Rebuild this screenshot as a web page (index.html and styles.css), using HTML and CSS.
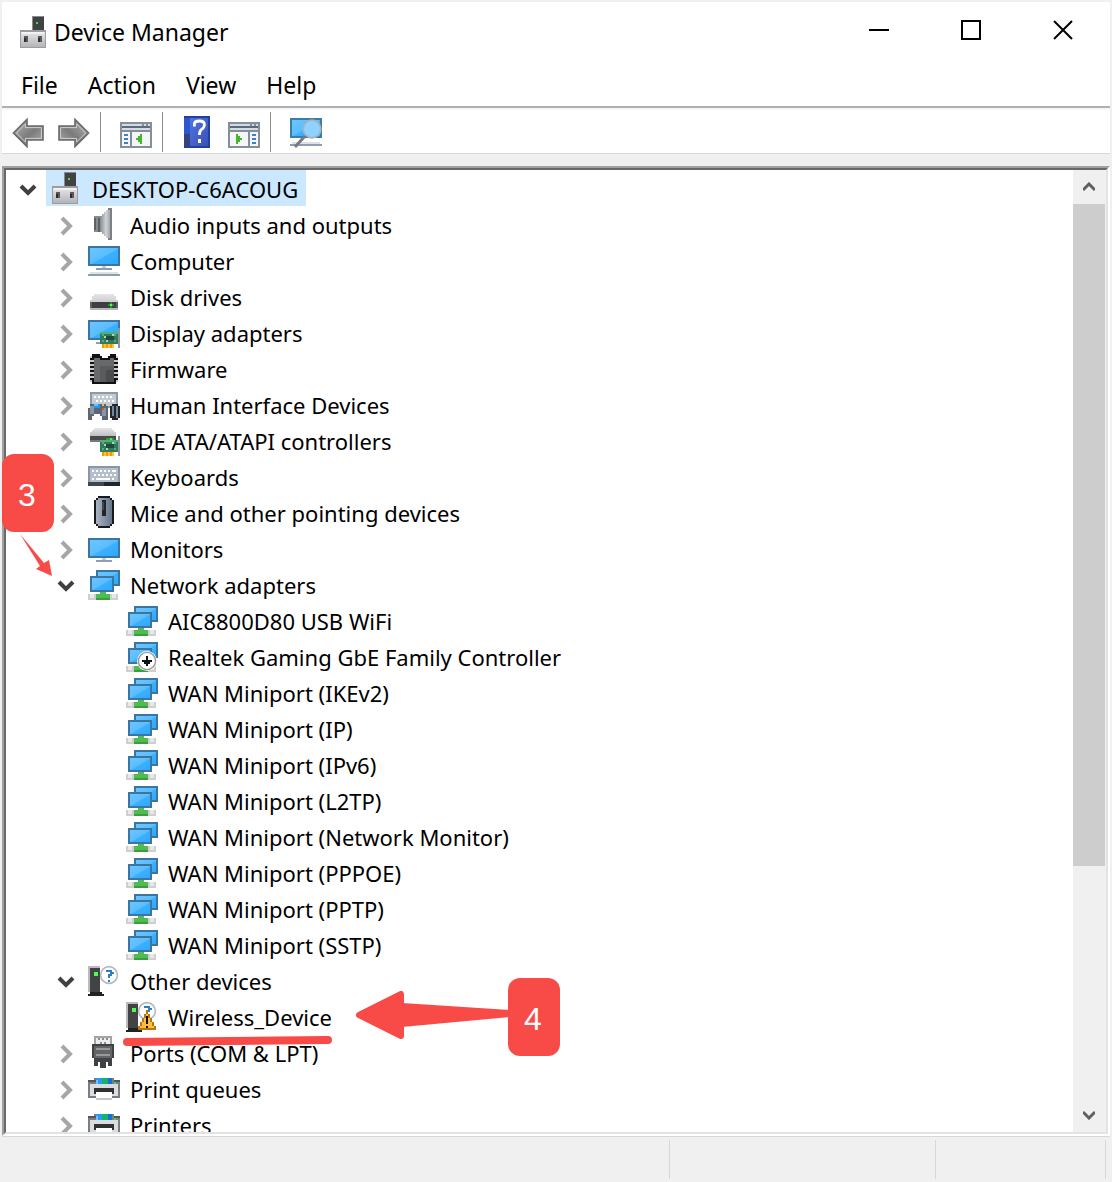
FILE: index.html
```html
<!DOCTYPE html>
<html lang="en">
  <head>
    <meta charset="UTF-8" />
    <meta name="viewport" content="width=device-width, initial-scale=1.0" />
    <title>Device Manager</title>
    <link rel="stylesheet" href="styles.css">
  </head>
  <body>
    <!-- Icon set, drawn on a 16 x 16 grid -->
    <svg class="sprite" aria-hidden="true">
      <defs>
        <linearGradient id="screen" x1="0" y1="0" x2="1" y2="1">
          <stop offset="0" stop-color="#6cc5ff" />
          <stop offset="0.5" stop-color="#5bbdff" />
          <stop offset="0.55" stop-color="#3bb0ff" />
          <stop offset="1" stop-color="#2fa8fb" />
        </linearGradient>
        <linearGradient id="metal" x1="0" y1="0" x2="0" y2="1">
          <stop offset="0" stop-color="#e6e6e8" />
          <stop offset="1" stop-color="#b4b4b8" />
        </linearGradient>
        <linearGradient id="cone" x1="0" y1="0" x2="1" y2="0">
          <stop offset="0" stop-color="#85898e" />
          <stop offset="0.5" stop-color="#d2d4d6" />
          <stop offset="1" stop-color="#8b8f95" />
        </linearGradient>
        <linearGradient id="arrowfill" x1="0" y1="0" x2="1" y2="1">
          <stop offset="0" stop-color="#b8b8b8" />
          <stop offset="0.55" stop-color="#7b7b7b" />
          <stop offset="1" stop-color="#b0b0b0" />
        </linearGradient>
        <linearGradient id="helpfill" x1="0" y1="0" x2="1" y2="1">
          <stop offset="0" stop-color="#4f74e0" />
          <stop offset="1" stop-color="#3c50b8" />
        </linearGradient>
        <linearGradient id="mousefill" x1="0" y1="0" x2="1" y2="0">
          <stop offset="0" stop-color="#a9b4c2" />
          <stop offset="1" stop-color="#66758a" />
        </linearGradient>
      </defs>

      <symbol id="i-root" viewBox="-1 0 16 16">
        <path fill="#8b8b8b" d="M6 0h6v8h-6z" />
        <path fill="#404244" d="M6.500 0.500h5.500v7.500h-5.500z" />
        <path fill="#3be03b" d="M8 3h1v1h-1z" />
        <path fill="#9d9da1" d="M0 7h13v9h-13z" />
        <path fill="url(#metal)" d="M.5 8h12v7.500h-12z" />
        <path fill="#f2f2f3" d="M1 8h11v1h-11z" />
        <path fill="#58595c" d="M2 10h2v3h-2zM9 10h2v3h-2z" />
        <path fill="#2d2e30" d="M2 11h1v2h-1zM9 11h1v2h-1z" />
      </symbol>

      <symbol id="i-audio" viewBox="0 0 16 16">
        <path fill="#878b91" d="M3 4h4v8h-4z" />
        <path fill="#5d6166" d="M3 5h1v6h-1zM5 5h1v7h-1z" />
        <path fill="url(#cone)" d="M6 4h1v-1h1v-1h1v-1h1v-1h2v16h-2v-1h-1v-1h-1v-1h-1v-1h-1z" />
        <path fill="#7d8187" d="M10 0h2v16h-2v-1h1v-14h-1z" />
      </symbol>

      <symbol id="i-computer" viewBox="0 0 16 16">
        <path fill="#3a76a0" d="M0 1h16v10h-16z" />
        <path fill="url(#screen)" d="M1 2h14v8h-14z" />
        <path fill="#c3cbd5" d="M7 11h2v1h-2z" />
        <path fill="#8f9db2" d="M4 12h8v1h-8zM0 15h16v1h-16z" />
        <path fill="#dde1e6" d="M1 14h14v1h-14z" />
      </symbol>

      <symbol id="i-disk" viewBox="0 0 16 16">
        <path fill="url(#metal)" d="M3 7h10v1h1v2h1v5h-14v-5h1v-2h1z" />
        <path fill="#3d3f41" d="M1 11h14v3h-14z" />
        <path fill="#606264" d="M1 11h1v3h-1zM14 11h1v3h-1z" />
        <path fill="#2e8b32" d="M10 12h3v1h-3zM11 11h1v3h-1z" />
        <path fill="#4dff4d" d="M11 12h1v1h-1z" />
      </symbol>

      <symbol id="i-card" viewBox="0 0 16 16">
        <path fill="#8d949b" d="M15 6h1v10h-1z" />
        <path fill="#2f7d58" d="M6 8h9v6h-9z" />
        <path fill="#52ad7e" d="M7 9h1v1h-1zM13 9h1v1h-1zM7 12h1v1h-1zM13 12h1v1h-1zM6 8h9v1h-9z" />
        <path fill="#1d4a3b" d="M9 10h4v2h-4z" />
        <path fill="#b4cfc2" d="M8 10h1v1h-1zM12 9h1v1h-1zM9 12h1v1h-1z" />
        <path fill="#f39a00" d="M7 14h6v2h-6z" />
        <path fill="#ffc13b" d="M8 14h1v2h-1zM10 14h1v2h-1zM12 14h1v2h-1z" />
      </symbol>

      <symbol id="i-display" viewBox="0 0 16 16">
        <path fill="#3a76a0" d="M0 2h16v10h-16z" />
        <path fill="url(#screen)" d="M1 3h14v8h-14z" />
        <path fill="#8f9db2" d="M4 13h4v1h-4z" />
        <use href="#i-card" width="16" height="16" />
      </symbol>

      <symbol id="i-firmware" viewBox="0 0 16 16">
        <path fill="#111" d="M2 1h4v1h1v1h3v-1h1v-1h3v15h-12z" />
        <path fill="#68696b" d="M3 3h3v1h5v-1h2v12h-10z" />
        <path fill="#5a5b5d" d="M6 7h7v8h-7z" />
        <path fill="#4b4c4e" d="M9 9h4v6h-4z" />
        <path fill="#111" d="M1 3h2v1h-2zM1 5h2v1h-2zM1 7h2v1h-2zM1 9h2v1h-2zM1 11h2v1h-2zM1 13h2v1h-2zM13 3h2v1h-2zM13 5h2v1h-2zM13 7h2v1h-2zM13 9h2v1h-2zM13 11h2v1h-2zM13 13h2v1h-2z" />
        <path fill="#c5c9ce" d="M1 2h1v1h-1zM1 4h2v1h-2zM1 6h2v1h-2zM1 8h2v1h-2zM1 10h2v1h-2zM1 12h2v1h-2zM1 14h1v1h-1zM14 2h1v1h-1zM13 4h2v1h-2zM13 6h2v1h-2zM13 8h2v1h-2zM13 10h2v1h-2zM13 12h2v1h-2zM14 14h1v1h-1z" />
      </symbol>

      <symbol id="i-hid" viewBox="0 0 16 16">
        <path fill="#8e9aa8" d="M1 2h14v8h-14z" />
        <path fill="#c3cbd3" d="M2 3h12v6h-12z" />
        <path fill="#fff" d="M3 4h1v1h-1zM5 4h1v1h-1zM7 4h1v1h-1zM9 4h1v1h-1zM11 4h1v1h-1zM4 6h1v1h-1zM6 6h1v1h-1zM8 6h1v1h-1zM10 6h1v1h-1zM12 6h1v1h-1z" />
        <path fill="#5c6673" d="M1 8h8v1h1v7h-3v-2h-1v-1h-3v1h-1v2h-2v-6h1z" />
        <path fill="#8b96a4" d="M1 9h2v4h-2zM7 10h2v4h-2z" />
        <path fill="#2196f3" d="M3 8h3v2h-3z" />
        <path fill="#63c0ff" d="M3 8h2v1h-2z" />
        <path fill="#f0c040" d="M7 8h1v1h-1z" />
        <path fill="#e2533c" d="M7 10h1v1h-1z" />
        <path fill="#23272c" d="M12 8h3v1h1v6h-1v1h-3v-1h-1v-6h1z" />
        <path fill="#75859a" d="M12 9h1v5h-1zM14 9h1v6h-1z" />
      </symbol>

      <symbol id="i-ide" viewBox="0 0 16 16">
        <path fill="url(#metal)" d="M3 2h9v1h1v1h1v3h-13v-3h1v-1h1z" />
        <path fill="#47494b" d="M1 6h13v3h-13z" />
        <path fill="#77797b" d="M1 8h5v1h-5z" />
        <use href="#i-card" width="16" height="16" />
        <path fill="#45f045" d="M11 7h1v1h-1z" />
        <path fill="#2c9c31" d="M9 7h2v1h-2zM12 7h1v1h-1z" />
      </symbol>

      <symbol id="i-keyboard" viewBox="0 0 16 16">
        <path fill="#8996a5" d="M0 3h16v9h-16z" />
        <path fill="#b5bfc9" d="M1 4h14v7h-14z" />
        <path fill="#fff" d="M2 5h1v1h-1zM4 5h1v1h-1zM6 5h1v1h-1zM8 5h1v1h-1zM10 5h1v1h-1zM12 5h2v1h-2zM3 7h1v1h-1zM5 7h1v1h-1zM7 7h1v1h-1zM9 7h1v1h-1zM11 7h1v1h-1zM13 7h1v1h-1zM2 9h1v1h-1zM4 9h7v1h-7zM12 9h1v1h-1z" />
        <path fill="#3b4754" d="M0 11h16v2h-16z" />
        <path fill="#1f262d" d="M8 11h8v2h-8z" />
      </symbol>

      <symbol id="i-mouse" viewBox="0 0 16 16">
        <path fill="#17191c" d="M5 0h6v1h1v1h1v12h-1v1h-1v1h-6v-1h-1v-1h-1v-12h1v-1h1z" />
        <path fill="url(#mousefill)" d="M5 1h6v1h1v12h-1v1h-6v-1h-1v-12h1z" />
        <path fill="#22262b" d="M7 2h2v8h-2z" />
        <path fill="#3f4852" d="M7 3h1v4h-1z" />
      </symbol>

      <symbol id="i-monitor" viewBox="0 0 16 16">
        <path fill="#3a76a0" d="M0 3h16v10h-16z" />
        <path fill="url(#screen)" d="M1 4h14v8h-14z" />
        <path fill="#c3cbd5" d="M7 13h2v1h-2z" />
        <path fill="#8f9db2" d="M4 14h8v1h-8z" />
      </symbol>

      <symbol id="i-network" viewBox="0 0 16 16">
        <path fill="#3a76a0" d="M4 1h12v8h-12z" />
        <path fill="url(#screen)" d="M5 2h10v6h-10z" />
        <path fill="#3a76a0" d="M1 4h12v8h-12z" />
        <path fill="url(#screen)" d="M2 5h10v6h-10z" />
        <path fill="#cfcfcf" d="M0 13h15v3h-15z" />
        <path fill="#e8e8e8" d="M1 13h2v2h-2zM12 13h2v2h-2z" />
        <path fill="#4fbb52" d="M6 12h3v1h2v3h-7v-3h2z" />
        <path fill="#3a9d40" d="M4 15h7v1h-7z" />
      </symbol>

      <symbol id="i-network-off" viewBox="0 0 16 16">
        <use href="#i-network" width="16" height="16" />
        <circle cx="10.500" cy="10.500" r="5" fill="#fff" />
        <circle cx="10.500" cy="10.500" r="4.300" fill="#fff" stroke="#9a9a9a" stroke-width=".7" />
        <path fill="#111" d="M10 8h1v2h2v1h-1v1h-1v1h-1v-1h-1v-1h-1v-1h2z" />
      </symbol>

      <symbol id="i-other" viewBox="0 0 16 16">
        <path fill="#b9bbbd" d="M0 1h6v13h-6z" />
        <path fill="#414345" d="M1 2h5v12h-5z" />
        <path fill="#202122" d="M1 14h6v1h1v1h-8v-1h1z" />
        <path fill="#4dff4d" d="M3 4h2v2h-2z" />
        <circle cx="10.500" cy="5.500" r="4.200" fill="#fff" stroke="#b5bac0" stroke-width=".8" />
        <path fill="#2a7fc9" d="M9 3h3v1h1v1h-1v1h-1v1h-1v-2h1v-1h-2zM10 8h1v1h-1z" />
      </symbol>

      <symbol id="i-warning" viewBox="0 0 16 16">
        <use href="#i-other" width="16" height="16" />
        <path fill="#b9770a" d="M10 5h1v2h1v2h1v2h1v2h1v2h-9v-2h1v-2h1v-2h1v-2h1z" />
        <path fill="#ffbe3f" d="M10 7h1v2h1v2h1v2h1v1h-7v-1h1v-2h1v-2h1z" />
        <path fill="#111" d="M10 8h1v4h-1zM10 13h1v1h-1z" />
      </symbol>

      <symbol id="i-port" viewBox="0 0 16 16">
        <path fill="#a3a6a9" d="M3 0h9v4h-9z" />
        <path fill="#ececec" d="M4 1h7v3h-7z" />
        <path fill="#8b8e91" d="M5 1h1v1h-1zM7 1h1v1h-1zM9 1h1v1h-1zM6 3h1v1h-1zM8 3h1v1h-1z" />
        <path fill="#3f4143" d="M2 4h11v7h-1v4h-2v-2h-1v3h-3v-3h-1v2h-2v-4h-1z" />
        <path fill="#626467" d="M3 5h9v6h-9z" />
        <path fill="#97999b" d="M4 6h7v1h-7zM4 9h7v1h-7z" />
      </symbol>

      <symbol id="i-printer" viewBox="0 0 16 16">
        <path fill="#797e84" d="M0 4h3v-1h10v1h3v9h-16z" />
        <path fill="#dadcde" d="M1 6h14v6h-14z" />
        <path fill="#53575b" d="M0 4h4v1h-4zM13 4h3v1h-3z" />
        <path fill="#2b9af3" d="M4 3h3v3h-3z" />
        <path fill="#12b36b" d="M7 3h3v3h-3z" />
        <path fill="#1c6fd0" d="M10 3h2v3h-2z" />
        <path fill="#6fc1ff" d="M4 4h1v2h-1z" />
        <path fill="#36e836" d="M13 5h1v1h-1z" />
        <path fill="#303234" d="M3 8h10v3h-10z" />
        <path fill="#fff" d="M4 10h8v4h-8z" />
        <path fill="#c7c9cb" d="M4 13h8v1h-8z" />
      </symbol>

      <symbol id="i-back" viewBox="0 0 16 16">
        <path fill="url(#arrowfill)" stroke="#6a6a6a" stroke-width=".8" d="M.7 8.500l6.800 -6.800v3.300h8v7h-8v3.300z" />
        <path fill="none" stroke="#cfcfcf" stroke-width=".5" d="M2.200 8.500l4.500 -4.500v1.800h8v5.400h-8v1.800z" />
      </symbol>

      <symbol id="i-window-left" viewBox="0 0 16 16">
        <path fill="#868e97" d="M0 3h16v13h-16z" />
        <path fill="#d5dbe3" d="M1 4h10v1h-10zM12 4h1v1h-1zM14 4h1v1h-1zM1 6h14v1h-14z" />
        <path fill="#5b6b80" d="M1 5h14v1h-14z" />
        <path fill="#f4f5f6" d="M1 8h14v7h-14z" />
        <path fill="#7f8da0" d="M5 7h1v8h-1z" />
        <path fill="#3f7fc4" d="M2 9h2v1h-2zM2 11h2v1h-2zM2 13h2v1h-2z" />
        <path fill="#45b52c" d="M8 11h1v-1h1v-1h1v5h-1v-1h-1v-1h-1z" />
      </symbol>

      <symbol id="i-window-right" viewBox="0 0 16 16">
        <path fill="#868e97" d="M0 3h16v13h-16z" />
        <path fill="#d5dbe3" d="M1 4h10v1h-10zM12 4h1v1h-1zM14 4h1v1h-1zM1 6h14v1h-14z" />
        <path fill="#5b6b80" d="M1 5h14v1h-14z" />
        <path fill="#f4f5f6" d="M1 8h14v7h-14z" />
        <path fill="#7f8da0" d="M10 7h1v8h-1z" />
        <path fill="#3f7fc4" d="M12 9h2v1h-2zM12 11h2v1h-2zM12 13h2v1h-2z" />
        <path fill="#45b52c" d="M4 9h1v1h1v1h1v1h-1v1h-1v1h-1z" />
      </symbol>

      <symbol id="i-help" viewBox="0 0 16 16">
        <path fill="#24409f" d="M1 0h13v16h-13z" />
        <path fill="#2d56d0" d="M1 1h3v8h-3z" />
        <path fill="#33437f" d="M1 9h3v6h-3z" />
        <path fill="url(#helpfill)" d="M4 1h9v14h-9z" />
        <path fill="none" stroke="#fff" stroke-width="1.400" d="M6.200 5.200v-1.200q0 -1.500 2.500 -1.500t2.500 1.700q0 1.500 -1.300 2.400q-1.200 .8 -1.200 2.900" />
        <path fill="#fff" d="M8 11.500h1.500v2h-1.500z" />
      </symbol>

      <symbol id="i-scan" viewBox="0 0 16 16">
        <path fill="#3a7fa0" d="M0 1h16v10h-16z" />
        <path fill="url(#screen)" d="M1 2h14v8h-14z" />
        <path fill="#8f9db2" d="M0 14h16v1h-16z" />
        <path fill="#dde1e6" d="M1 13h14v1h-14z" />
        <path fill="none" stroke="#727a82" stroke-width="1.500" d="M7.500 10l-5 5.500" />
        <circle cx="11" cy="6.500" r="4.400" fill="#8fd2ff" stroke="#a4b3bf" stroke-width=".9" />
      </symbol>

      <symbol id="c-right" viewBox="0 0 20 20">
        <path fill="none" stroke="#a6a6a6" stroke-width="4" d="M6 2l8 8l-8 8" />
      </symbol>
      <symbol id="c-down" viewBox="0 0 20 20">
        <path fill="none" stroke="#404040" stroke-width="4" d="M3 6l7 7l7 -7" />
      </symbol>
    </svg>

    <div class="window">
      <header class="titlebar">
        <svg class="icon"><use href="#i-root" /></svg>
        <h1>Device Manager</h1>
        <div class="caption-buttons">
          <button type="button" aria-label="Minimize">
            <svg viewBox="0 0 20 20"><path d="M0 10h20" /></svg>
          </button>
          <button type="button" aria-label="Maximize">
            <svg viewBox="0 0 20 20"><path d="M1 1h18v18h-18z" /></svg>
          </button>
          <button type="button" aria-label="Close">
            <svg viewBox="0 0 20 20"><path d="M1 1l18 18M19 1l-18 18" /></svg>
          </button>
        </div>
      </header>

      <nav class="menubar">
        <button type="button">File</button>
        <button type="button">Action</button>
        <button type="button">View</button>
        <button type="button">Help</button>
      </nav>

      <div class="toolbar">
        <button type="button" aria-label="Back"><svg class="icon"><use href="#i-back" /></svg></button>
        <button type="button" aria-label="Forward"><svg class="icon flip"><use href="#i-back" /></svg></button>
        <span class="separator"></span>
        <button type="button" aria-label="Show console tree"><svg class="icon"><use href="#i-window-left" /></svg></button>
        <span class="separator"></span>
        <button type="button" aria-label="Help"><svg class="icon"><use href="#i-help" /></svg></button>
        <button type="button" aria-label="Show action pane"><svg class="icon"><use href="#i-window-right" /></svg></button>
        <span class="separator"></span>
        <button type="button" aria-label="Scan for hardware changes"><svg class="icon"><use href="#i-scan" /></svg></button>
      </div>

      <main class="tree-frame">
        <div class="tree-inner">
          <ul class="tree">
            <li>
              <div class="row">
                <button type="button" class="twisty" aria-label="Collapse"><svg><use href="#c-down" /></svg></button>
                <button type="button" class="node selected"><svg class="icon"><use href="#i-root" /></svg><span>DESKTOP-C6ACOUG</span></button>
              </div>
              <ul>
                <li class="row">
                  <button type="button" class="twisty" aria-label="Expand"><svg><use href="#c-right" /></svg></button>
                  <button type="button" class="node"><svg class="icon"><use href="#i-audio" /></svg><span>Audio inputs and outputs</span></button>
                </li>
                <li class="row">
                  <button type="button" class="twisty" aria-label="Expand"><svg><use href="#c-right" /></svg></button>
                  <button type="button" class="node"><svg class="icon"><use href="#i-computer" /></svg><span>Computer</span></button>
                </li>
                <li class="row">
                  <button type="button" class="twisty" aria-label="Expand"><svg><use href="#c-right" /></svg></button>
                  <button type="button" class="node"><svg class="icon"><use href="#i-disk" /></svg><span>Disk drives</span></button>
                </li>
                <li class="row">
                  <button type="button" class="twisty" aria-label="Expand"><svg><use href="#c-right" /></svg></button>
                  <button type="button" class="node"><svg class="icon"><use href="#i-display" /></svg><span>Display adapters</span></button>
                </li>
                <li class="row">
                  <button type="button" class="twisty" aria-label="Expand"><svg><use href="#c-right" /></svg></button>
                  <button type="button" class="node"><svg class="icon"><use href="#i-firmware" /></svg><span>Firmware</span></button>
                </li>
                <li class="row">
                  <button type="button" class="twisty" aria-label="Expand"><svg><use href="#c-right" /></svg></button>
                  <button type="button" class="node"><svg class="icon"><use href="#i-hid" /></svg><span>Human Interface Devices</span></button>
                </li>
                <li class="row">
                  <button type="button" class="twisty" aria-label="Expand"><svg><use href="#c-right" /></svg></button>
                  <button type="button" class="node"><svg class="icon"><use href="#i-ide" /></svg><span>IDE ATA/ATAPI controllers</span></button>
                </li>
                <li class="row">
                  <button type="button" class="twisty" aria-label="Expand"><svg><use href="#c-right" /></svg></button>
                  <button type="button" class="node"><svg class="icon"><use href="#i-keyboard" /></svg><span>Keyboards</span></button>
                </li>
                <li class="row">
                  <button type="button" class="twisty" aria-label="Expand"><svg><use href="#c-right" /></svg></button>
                  <button type="button" class="node"><svg class="icon"><use href="#i-mouse" /></svg><span>Mice and other pointing devices</span></button>
                </li>
                <li class="row">
                  <button type="button" class="twisty" aria-label="Expand"><svg><use href="#c-right" /></svg></button>
                  <button type="button" class="node"><svg class="icon"><use href="#i-monitor" /></svg><span>Monitors</span></button>
                </li>
                <li>
                  <div class="row">
                    <button type="button" class="twisty" aria-label="Collapse"><svg><use href="#c-down" /></svg></button>
                    <button type="button" class="node"><svg class="icon"><use href="#i-network" /></svg><span>Network adapters</span></button>
                  </div>
                  <ul>
                    <li class="row leaf"><button type="button" class="node"><svg class="icon"><use href="#i-network" /></svg><span>AIC8800D80 USB WiFi</span></button></li>
                    <li class="row leaf"><button type="button" class="node"><svg class="icon"><use href="#i-network-off" /></svg><span>Realtek Gaming GbE Family Controller</span></button></li>
                    <li class="row leaf"><button type="button" class="node"><svg class="icon"><use href="#i-network" /></svg><span>WAN Miniport (IKEv2)</span></button></li>
                    <li class="row leaf"><button type="button" class="node"><svg class="icon"><use href="#i-network" /></svg><span>WAN Miniport (IP)</span></button></li>
                    <li class="row leaf"><button type="button" class="node"><svg class="icon"><use href="#i-network" /></svg><span>WAN Miniport (IPv6)</span></button></li>
                    <li class="row leaf"><button type="button" class="node"><svg class="icon"><use href="#i-network" /></svg><span>WAN Miniport (L2TP)</span></button></li>
                    <li class="row leaf"><button type="button" class="node"><svg class="icon"><use href="#i-network" /></svg><span>WAN Miniport (Network Monitor)</span></button></li>
                    <li class="row leaf"><button type="button" class="node"><svg class="icon"><use href="#i-network" /></svg><span>WAN Miniport (PPPOE)</span></button></li>
                    <li class="row leaf"><button type="button" class="node"><svg class="icon"><use href="#i-network" /></svg><span>WAN Miniport (PPTP)</span></button></li>
                    <li class="row leaf"><button type="button" class="node"><svg class="icon"><use href="#i-network" /></svg><span>WAN Miniport (SSTP)</span></button></li>
                  </ul>
                </li>
                <li>
                  <div class="row">
                    <button type="button" class="twisty" aria-label="Collapse"><svg><use href="#c-down" /></svg></button>
                    <button type="button" class="node"><svg class="icon"><use href="#i-other" /></svg><span>Other devices</span></button>
                  </div>
                  <ul>
                    <li class="row leaf"><button type="button" class="node"><svg class="icon"><use href="#i-warning" /></svg><span>Wireless_Device</span></button></li>
                  </ul>
                </li>
                <li class="row">
                  <button type="button" class="twisty" aria-label="Expand"><svg><use href="#c-right" /></svg></button>
                  <button type="button" class="node"><svg class="icon"><use href="#i-port" /></svg><span>Ports (COM &amp; LPT)</span></button>
                </li>
                <li class="row">
                  <button type="button" class="twisty" aria-label="Expand"><svg><use href="#c-right" /></svg></button>
                  <button type="button" class="node"><svg class="icon"><use href="#i-printer" /></svg><span>Print queues</span></button>
                </li>
                <li class="row">
                  <button type="button" class="twisty" aria-label="Expand"><svg><use href="#c-right" /></svg></button>
                  <button type="button" class="node"><svg class="icon"><use href="#i-printer" /></svg><span>Printers</span></button>
                </li>
              </ul>
            </li>
          </ul>

          <div class="scrollbar">
            <button type="button" aria-label="Scroll up"><svg viewBox="0 0 12 10"><path d="M0 8l6 -6l6 6" /></svg></button>
            <div class="track"><div class="thumb"></div></div>
            <button type="button" aria-label="Scroll down"><svg viewBox="0 0 12 10"><path d="M0 2l6 6l6 -6" /></svg></button>
          </div>
        </div>
      </main>

      <footer class="statusbar">
        <div class="pane pane-main"></div>
        <div class="pane pane-mid"></div>
        <div class="pane pane-end"></div>
      </footer>
    </div>

    <!-- Step markers over the window -->
    <div class="step step-3">3</div>
    <svg class="pointer pointer-3" viewBox="0 0 34 44"><path d="M1 0L25 29L30 26L33 42L17 35L21 32Z" /></svg>
    <div class="step step-4">4</div>
    <svg class="pointer pointer-4" viewBox="0 0 154 50">
      <path d="M46 13L154 20V27L46 37Z" />
      <path class="head" d="M3 25L45 4V46Z" />
    </svg>
    <svg class="pointer underline" viewBox="0 0 212 12"><path d="M6 7L207 5" /></svg>
  </body>
</html>
```
FILE: styles.css
```css
* {
  box-sizing: border-box;
}

body {
  margin: 0;
  position: relative;
  font-family: "Noto Sans", "Segoe UI", sans-serif;
  font-size: 22px;
  line-height: 32px;
  color: #000;
  background-color: #f0f0f0;
}

button {
  margin: 0;
  padding: 0;
  border: 0;
  background: none;
  font: inherit;
  color: inherit;
}

ul {
  margin: 0;
  padding: 0;
  list-style: none;
}

.sprite {
  position: absolute;
  width: 0;
  height: 0;
}

.icon {
  display: block;
  flex: none;
  width: 32px;
  height: 32px;
}

.flip {
  transform: scaleX(-1);
}

.window {
  display: flex;
  flex-direction: column;
  height: 100vh;
  padding: 2px 2px 0;
}

/* Title bar */
.titlebar {
  display: flex;
  align-items: center;
  height: 60px;
  padding-left: 16px;
  background-color: #fff;
}

.titlebar h1 {
  margin: 0;
  padding-left: 4px;
  font-size: 23px;
  font-weight: normal;
}

.caption-buttons {
  display: flex;
  align-self: flex-start;
  margin-left: auto;
  padding-right: 1px;
}

.caption-buttons button {
  display: flex;
  align-items: center;
  justify-content: center;
  width: 92px;
  height: 56px;
}

.caption-buttons svg {
  width: 20px;
  height: 20px;
  fill: none;
  stroke: #000;
  stroke-width: 2;
}

/* Menu bar */
.menubar {
  display: flex;
  height: 46px;
  padding-left: 4px;
  font-size: 23px;
  background-color: #fff;
  border-bottom: 2px solid #b0b0b0;
}

.menubar button {
  padding: 6px 15px 4px;
}

/* Toolbar */
.toolbar {
  display: flex;
  align-items: center;
  height: 46px;
  padding-left: 3px;
  background-color: #fff;
  border-top: 2px solid #f3f8fd;
  border-bottom: 1px solid #d9d9d9;
}

.toolbar button {
  display: flex;
  justify-content: center;
  width: 46px;
}

.separator {
  width: 1px;
  height: 40px;
  margin: 0 12px 0 3px;
  background-color: #8c8c8c;
}

/* Device tree */
.tree-frame {
  flex: 1;
  min-height: 0;
  margin-top: 12px;
  border: 2px solid;
  border-color: #a0a0a0 #fff #fff #a0a0a0;
}

.tree-inner {
  display: flex;
  height: 100%;
  border: 2px solid;
  border-color: #696969 #e3e3e3 #e3e3e3 #696969;
  background-color: #fff;
}

.tree {
  flex: 1;
  overflow: hidden;
}

.tree ul {
  padding-left: 38px;
}

.row {
  display: flex;
  height: 36px;
  padding-left: 12px;
}

.leaf {
  padding-left: 40px;
}

.twisty {
  display: flex;
  width: 20px;
  margin-right: 8px;
  padding-top: 10px;
}

.twisty svg {
  width: 20px;
  height: 20px;
}

.node {
  display: flex;
  align-items: center;
  gap: 10px;
  padding: 0 8px 0 4px;
  white-space: nowrap;
}

.node span {
  padding-top: 2px;
}

.selected {
  background-color: #cce8ff;
}

/* Scroll bar */
.scrollbar {
  display: flex;
  flex-direction: column;
  width: 33px;
  background-color: #f0f0f0;
}

.scrollbar button {
  display: flex;
  align-items: center;
  justify-content: center;
  height: 34px;
  padding-right: 2px;
}

.scrollbar svg {
  width: 12px;
  height: 10px;
  fill: none;
  stroke: #606060;
  stroke-width: 3;
}

.track {
  flex: 1;
}

.thumb {
  height: 74%;
  margin-right: 1px;
  background-color: #cdcdcd;
}

/* Status bar */
.statusbar {
  display: flex;
  height: 46px;
  padding: 3px 4px 3px 0;
  border-top: 1px solid #d7d7d7;
}

.pane {
  border-right: 1px solid #d7d7d7;
}

.pane-main {
  flex: 669;
}

.pane-mid {
  flex: 266;
}

.pane-end {
  flex: 169;
}

/* Step markers */
.step {
  position: absolute;
  width: 52px;
  height: 78px;
  padding-right: 2px;
  border-radius: 12px;
  font-family: "Liberation Sans", Arial, sans-serif;
  font-size: 32px;
  line-height: 82px;
  text-align: center;
  color: #fff;
  background-color: #f84b48;
}

.step-3 {
  left: 2px;
  top: 454px;
}

.step-4 {
  left: 508px;
  top: 978px;
}

.pointer {
  position: absolute;
  fill: #f84b48;
}

.pointer-3 {
  left: 19px;
  top: 534px;
  width: 34px;
  height: 44px;
}

.pointer-4 {
  left: 356px;
  top: 990px;
  width: 154px;
  height: 50px;
}

.head {
  stroke: #f84b48;
  stroke-width: 6;
  stroke-linejoin: round;
}

.underline {
  left: 121px;
  top: 1035px;
  width: 212px;
  height: 12px;
}

.underline path {
  stroke: #f84b48;
  stroke-width: 8;
  stroke-linecap: round;
}
```
